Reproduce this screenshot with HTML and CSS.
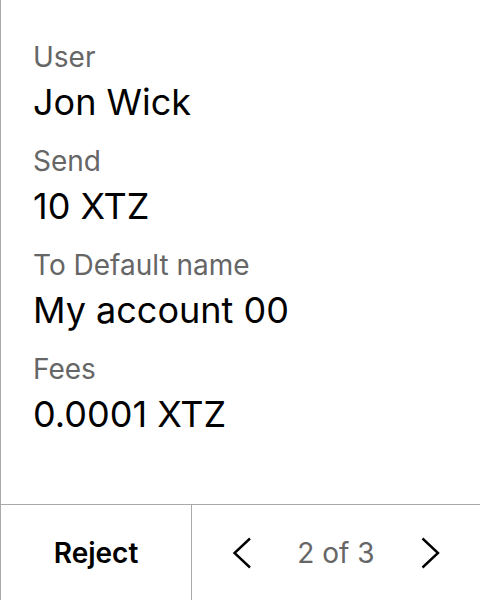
FILE: index.html
```html
<!DOCTYPE html>
<html>
<head>
<meta charset="utf-8">
<link rel="stylesheet" href="styles.css">
</head>
<body>
<div class="screen">
  <main class="fields">
    <div class="field">
      <div class="label">User</div>
      <div class="value">Jon Wick</div>
    </div>
    <div class="field">
      <div class="label">Send</div>
      <div class="value">10 XTZ</div>
    </div>
    <div class="field">
      <div class="label">To Default name</div>
      <div class="value">My account 00</div>
    </div>
    <div class="field">
      <div class="label">Fees</div>
      <div class="value">0.0001 XTZ</div>
    </div>
  </main>
  <footer class="bar">
    <div class="reject">Reject</div>
    <div class="pager">
      <svg class="chev" width="20" height="32" viewBox="0 0 20 32"><path d="M18 1.5 L2.5 16 L18 30.5" fill="none" stroke="#000" stroke-width="2.4"/></svg>
      <span class="count">2 of 3</span>
      <svg class="chev" width="20" height="32" viewBox="0 0 20 32"><path d="M2.5 1.5 L18 16 L2.5 30.5" fill="none" stroke="#000" stroke-width="2.4"/></svg>
    </div>
  </footer>
</div>
</body>
</html>
```
FILE: styles.css
```css
html, body {
  margin: 0;
  padding: 0;
  background: #fff;
}
body {
  font-family: Inter, "Noto Sans", sans-serif;
  color: #000;
}
.screen {
  width: 479px;
  height: 600px;
  border-left: 1px solid #aaa;
  display: flex;
  flex-direction: column;
}
.fields {
  flex: 1;
  padding: 40px 0 0 32px;
  display: flex;
  flex-direction: column;
  gap: 20px;
}
.field {
  display: flex;
  flex-direction: column;
  gap: 6px;
}
.label {
  font-size: 28px;
  line-height: 34px;
  color: #666;
}
.value {
  font-size: 36px;
  line-height: 44px;
  color: #000;
}
.bar {
  height: 95px;
  border-top: 1px solid #aaa;
  display: grid;
  grid-template-columns: 191px 1fr;
}
.reject {
  border-right: 1px solid #aaa;
  display: flex;
  align-items: center;
  justify-content: center;
  font-size: 28px;
  font-weight: 600;
}
.pager {
  display: flex;
  align-items: center;
  justify-content: center;
  gap: 45px;
}
.count {
  font-size: 28px;
  color: #666;
}
.chev {
  display: block;
}
```
